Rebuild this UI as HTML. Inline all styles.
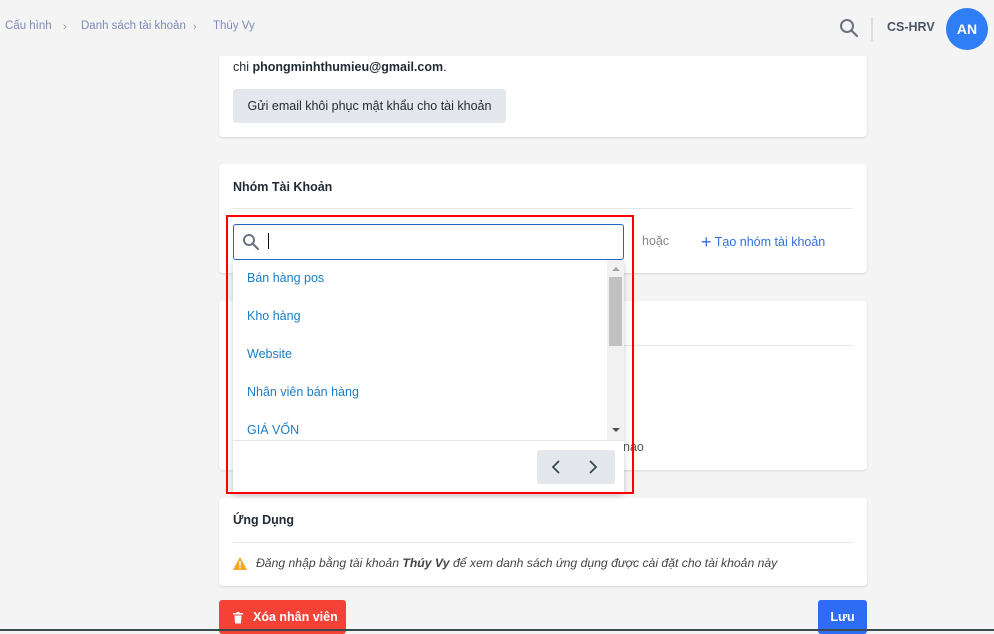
<!DOCTYPE html>
<html><head><meta charset="utf-8"><style>
*{box-sizing:border-box;margin:0;padding:0}
body{width:994px;height:631px;overflow:hidden;background:#f4f4f4;font-family:"Liberation Sans",sans-serif;position:relative;font-size:13px;color:#212b36}
.a{position:absolute}
.card{position:absolute;left:219px;width:648px;background:#fff;border-radius:4px;box-shadow:0 1px 2px rgba(0,0,0,.12)}
.title{position:absolute;left:14px;font-weight:bold;font-size:12.5px;color:#212b36}
.hr{position:absolute;left:14px;right:14px;height:1px;background:#e6e6e6}
.item{position:absolute;left:14px;color:#1a7dc4;font-size:12.5px}
.bc{position:absolute;top:20px;color:#7f8ab8;font-size:11.5px}
</style></head><body>
<div class="bc" style="left:5px">Cấu hình</div>
<div class="a" style="left:63px;top:21px;color:#999;font-size:11px">›</div>
<div class="bc" style="left:81px">Danh sách tài khoản</div>
<div class="a" style="left:193px;top:21px;color:#999;font-size:11px">›</div>
<div class="bc" style="left:213px">Thúy Vy</div>

<svg class="a" style="left:839px;top:18px" width="20" height="20" viewBox="0 0 20 20"><circle cx="8" cy="8" r="6" fill="none" stroke="#6b7280" stroke-width="2"/><path d="M12.5 12.5L18 18" stroke="#6b7280" stroke-width="2.2" stroke-linecap="round"/></svg>
<div class="a" style="left:871px;top:17px;width:2px;height:24px;background:#ddd"></div>
<div class="a" style="left:887px;top:20px;font-weight:bold;font-size:12.5px;color:#4b5563">CS-HRV</div>
<div class="a" style="left:946px;top:8px;width:42px;height:42px;border-radius:50%;background:#2f7ef5;color:#fff;font-weight:bold;font-size:14px;text-align:center;line-height:42px">AN</div>

<div class="card" style="top:56px;height:81px;border-radius:0 0 4px 4px">
<div class="a" style="left:14px;top:4px;font-size:12.5px;color:#212b36">chi <b>phongminhthumieu@gmail.com</b>.</div>
<div class="a" style="left:14px;top:33px;width:273px;height:34px;background:#e4e8ec;border-radius:3px;font-size:12.5px;line-height:34px;text-align:center;color:#212b36">Gửi email khôi phục mật khẩu cho tài khoản</div>
</div>

<div class="card" style="top:164px;height:109px">
<div class="title" style="top:16px">Nhóm Tài Khoản</div>
<div class="hr" style="top:44px"></div>
<div class="a" style="left:423px;top:70px;color:#888;font-size:12.5px">hoặc</div>
<div class="a" style="left:482px;top:66px;color:#2f6fe0;font-size:12.5px"><span style="font-size:18px;position:relative;top:2px">+</span> Tạo nhóm tài khoản</div>
</div>

<div class="card" style="top:301px;height:169px">
<div class="hr" style="top:44px"></div>
<div class="a" style="left:404px;top:139px;color:#555;font-size:12.5px">nào</div>
</div>

<div class="card" style="top:498px;height:88px">
<div class="title" style="top:15px">Ứng Dụng</div>
<div class="hr" style="top:44px"></div>
<svg class="a" style="left:14px;top:59px" width="14" height="13" viewBox="0 0 14 13"><path d="M7 0L14 13H0Z" fill="#f5a623"/><rect x="6.3" y="4" width="1.4" height="5" fill="#fff"/><rect x="6.3" y="10" width="1.4" height="1.4" fill="#fff"/></svg>
<div class="a" style="left:37px;top:58px;font-style:italic;color:#444;font-size:12.2px">Đăng nhập bằng tài khoản <b>Thúy Vy</b> để xem danh sách ứng dụng được cài đặt cho tài khoản này</div>
</div>

<div class="a" style="left:219px;top:600px;width:127px;height:34px;background:#f44336;border-radius:3px;color:#fff;font-weight:bold;font-size:12.5px;line-height:34px;padding-left:34px">Xóa nhân viên</div>
<svg class="a" style="left:233px;top:612px" width="10" height="12" viewBox="0 0 10 12"><rect x="0" y="1" width="10" height="1.5" fill="#fff"/><rect x="3.5" y="0" width="3" height="1.5" fill="#fff"/><path d="M1.5 3.5h7l-.6 8H2.1z" fill="#fff"/></svg>
<div class="a" style="left:818px;top:600px;width:49px;height:34px;background:#2f6cf6;border-radius:3px;color:#fff;font-weight:bold;font-size:12.5px;line-height:34px;text-align:center">Lưu</div>
<div class="a" style="left:0;top:629px;width:994px;height:2px;background:#3b4a4a"></div>

<!-- dropdown -->
<div class="a" style="left:233px;top:260px;width:391px;height:233px;background:#fff;box-shadow:0 2px 6px rgba(0,0,0,.2)"></div>
<div class="a" style="left:233px;top:224px;width:391px;height:36px;border:1px solid #1f66c7;border-radius:3px;background:#fff"></div>
<svg class="a" style="left:242px;top:233px" width="18" height="18" viewBox="0 0 18 18"><circle cx="7" cy="7" r="5" fill="none" stroke="#6b7280" stroke-width="2"/><path d="M10.8 10.8L16 16" stroke="#6b7280" stroke-width="2.2" stroke-linecap="round"/></svg>
<div class="a" style="left:268px;top:233px;width:1px;height:16px;background:#111"></div>
<div class="a" style="left:233px;top:260px;width:374px;height:180px">
<div class="item" style="top:11px">Bán hàng pos</div>
<div class="item" style="top:49px">Kho hàng</div>
<div class="item" style="top:87px">Website</div>
<div class="item" style="top:125px">Nhân viên bán hàng</div>
<div class="item" style="top:163px">GIÁ VỐN</div>
</div>
<div class="a" style="left:607px;top:260px;width:17px;height:180px;background:#f1f1f1"></div>
<div class="a" style="left:609px;top:277px;width:13px;height:69px;background:#c1c1c1"></div>
<div class="a" style="left:612px;top:267px;width:0;height:0;border-left:4px solid transparent;border-right:4px solid transparent;border-bottom:4px solid #a3a3a3"></div>
<div class="a" style="left:612px;top:428px;width:0;height:0;border-left:4px solid transparent;border-right:4px solid transparent;border-top:4px solid #505050"></div>
<div class="a" style="left:233px;top:440px;width:391px;height:1px;background:#e6e6e6"></div>
<div class="a" style="left:537px;top:450px;width:78px;height:34px;background:#e4e8ec;border-radius:3px"></div>
<svg class="a" style="left:550px;top:458px" width="54" height="18" viewBox="0 0 54 18"><path d="M9 3L3 9l6 6M40 3l6 6-6 6" fill="none" stroke="#37474f" stroke-width="1.8"/></svg>
<div class="a" style="left:226px;top:215px;width:408px;height:279px;border:2px solid #f00"></div>
</body></html>
